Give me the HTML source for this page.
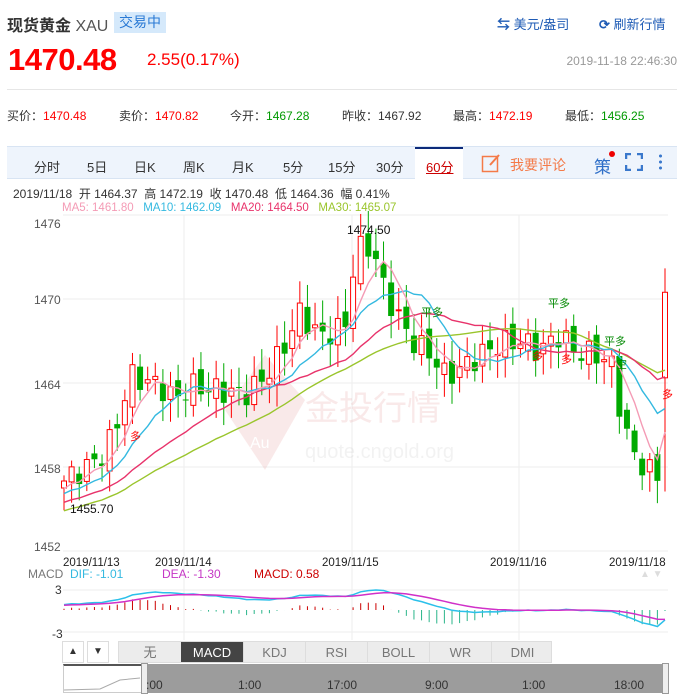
<!DOCTYPE html>
<html><head><meta charset="utf-8">
<style>
*{margin:0;padding:0;box-sizing:border-box}
body{width:684px;height:697px;background:#fff;font-family:"Liberation Sans","Noto Sans CJK SC",sans-serif;position:relative;overflow:hidden;color:#333}
.a{position:absolute;white-space:nowrap}
.r{color:#f00}.g{color:#090}
</style></head><body>
<div class="a" style="left:7px;top:12px;font-size:16px;color:#333;font-weight:bold">现货黄金 <span style="font-weight:normal;color:#555">XAU</span></div>
<div class="a" style="left:114px;top:12px;width:52px;height:21px;background:#d5e9fb;color:#2a7ad5;font-size:14px;line-height:21px;text-align:center">交易中</div>
<div class="a" style="left:497px;top:14px;font-size:13px;color:#1e5bb5"><span style="font-weight:bold">⇆</span> 美元/盎司</div>
<div class="a" style="left:599px;top:14px;font-size:13px;color:#1e5bb5"><span style="font-weight:bold">⟳</span> 刷新行情</div>
<div class="a r" style="left:8px;top:42px;font-size:31px;font-weight:bold;letter-spacing:-0.5px">1470.48</div>
<div class="a r" style="left:147px;top:50px;font-size:17px">2.55(0.17%)</div>
<div class="a" style="right:7px;top:54px;font-size:12px;color:#999">2019-11-18 22:46:30</div>
<div class="a" style="left:7px;top:89px;width:670px;height:1px;background:#e6e6e6"></div>
<div class="a" style="left:7px;top:107px;font-size:12px;color:#333">买价：<span class="r">1470.48</span></div>
<div class="a" style="left:119px;top:107px;font-size:12px">卖价：<span class="r">1470.82</span></div>
<div class="a" style="left:230px;top:107px;font-size:12px">今开：<span class="g">1467.28</span></div>
<div class="a" style="left:342px;top:107px;font-size:12px">昨收：1467.92</div>
<div class="a" style="left:453px;top:107px;font-size:12px">最高：<span class="r">1472.19</span></div>
<div class="a" style="left:565px;top:107px;font-size:12px">最低：<span class="g">1456.25</span></div>
<!-- tabs -->
<div class="a" style="left:7px;top:146px;width:670px;height:33px;background:#eef4fc;border-top:1px solid #d8e4f3;border-bottom:1px solid #d8e4f3"></div>
<div class="a" style="left:415px;top:147px;width:48px;height:33px;background:#fff;border-top:2px solid #0c2a7a"></div>
<div class="a" style="left:0;top:157px;font-size:13px;color:#333;width:470px">
<span class="a" style="left:34px">分时</span><span class="a" style="left:87px">5日</span><span class="a" style="left:134px">日K</span><span class="a" style="left:183px">周K</span><span class="a" style="left:232px">月K</span><span class="a" style="left:283px">5分</span><span class="a" style="left:328px">15分</span><span class="a" style="left:376px">30分</span><span class="a" style="left:426px;color:#c00;text-decoration:underline">60分</span></div>
<svg class="a" style="left:481px;top:153px" width="20" height="20"><rect x="1.5" y="3.5" width="15" height="15" fill="none" stroke="#f47a48" stroke-width="1.5"/><path d="M9 12 L18 2" stroke="#f47a48" stroke-width="2"/></svg>
<div class="a" style="left:510px;top:155px;font-size:14px;color:#f47a48">我要评论</div>
<div class="a" style="left:594px;top:153px;font-size:17px;color:#2f6fc8">策</div>
<div class="a" style="left:609px;top:151px;width:6px;height:6px;border-radius:3px;background:#e00"></div>
<svg class="a" style="left:625px;top:153px" width="18" height="18" fill="none" stroke="#3a78cc" stroke-width="2.5"><path d="M1 6V1h5M12 1h5v5M17 12v5h-5M6 17H1v-5"/></svg>
<div class="a" style="left:659px;top:153px;width:3px;height:18px;background:radial-gradient(circle,#3a78cc 1.4px,transparent 1.6px) 0 0/3px 6px"></div>
<div class="a" style="left:13px;top:185px;font-size:12px;color:#333">2019/11/18 &nbsp;开 1464.37 &nbsp;高 1472.19 &nbsp;收 1470.48 &nbsp;低 1464.36 &nbsp;幅 0.41%</div>
<div class="a" style="left:62px;top:202px;font-size:11.5px"><span style="color:#f49bb5">MA5: 1461.80</span> &nbsp; <span style="color:#34b9e0">MA10: 1462.09</span> &nbsp; <span style="color:#e8336b">MA20: 1464.50</span> &nbsp; <span style="color:#9ac52c">MA30: 1465.07</span></div>
<svg id="ch" class="a" style="left:0;top:0" width="684" height="697"></svg>
<div class="a" style="left:28px;top:567px;font-size:12px;color:#777">MACD <span style="color:#34b9e0">&nbsp;DIF: -1.01</span></div>
<div class="a" style="left:162px;top:567px;font-size:12px;color:#c537c5">DEA: -1.30</div>
<div class="a" style="left:254px;top:567px;font-size:12px;color:#c00">MACD: 0.58</div>
<div class="a" style="left:640px;top:569px;font-size:10px;color:#ddd">▲ ▼</div>
<!-- bottom buttons -->
<div class="a" style="left:62px;top:641px;width:22px;height:22px;border:1px solid #ddd;font-size:10px;text-align:center;line-height:20px">▲</div>
<div class="a" style="left:87px;top:641px;width:22px;height:22px;border:1px solid #ddd;font-size:10px;text-align:center;line-height:20px">▼</div>
<div class="a" style="left:118px;top:641px;width:434px;height:22px;background:#ececec;border:1px solid #ddd;font-size:13px;color:#777;line-height:21px">
<span class="a" style="left:0;width:62px;text-align:center">无</span>
<span class="a" style="left:62px;width:62px;text-align:center;background:#444;color:#fff;height:20px">MACD</span>
<span class="a" style="left:124px;width:62px;text-align:center;border-left:1px solid #ddd">KDJ</span>
<span class="a" style="left:186px;width:62px;text-align:center;border-left:1px solid #ddd">RSI</span>
<span class="a" style="left:248px;width:62px;text-align:center;border-left:1px solid #ddd">BOLL</span>
<span class="a" style="left:310px;width:62px;text-align:center;border-left:1px solid #ddd">WR</span>
<span class="a" style="left:372px;width:62px;text-align:center;border-left:1px solid #ddd">DMI</span></div>
<div class="a" style="left:63px;top:664px;width:605px;height:29px;border:1px solid #ccc;border-top:2px solid #555"></div>
<div class="a" style="left:147px;top:664px;width:519px;height:29px;background:#9c9c9c"></div>
<div class="a" style="left:141px;top:663px;width:7px;height:31px;background:#eee;border:1px solid #999"></div>
<div class="a" style="left:662px;top:663px;width:7px;height:31px;background:#eee;border:1px solid #999"></div>
<div class="a" style="left:146px;top:678px;font-size:12px;color:#333">:00</div>
<div class="a" style="left:238px;top:678px;font-size:12px;color:#333">1:00</div>
<div class="a" style="left:327px;top:678px;font-size:12px;color:#333">17:00</div>
<div class="a" style="left:425px;top:678px;font-size:12px;color:#333">9:00</div>
<div class="a" style="left:522px;top:678px;font-size:12px;color:#333">1:00</div>
<div class="a" style="left:614px;top:678px;font-size:12px;color:#333">18:00</div>
<script>
var S=document.getElementById('ch'),h='';
function Y(p){return 299+(1470-p)*14.0}
[215,299,383,467,551].forEach(function(y){h+='<line x1="63" x2="668" y1="'+y+'" y2="'+y+'" stroke="#eee"/>'});
[184,352,519].forEach(function(x){h+='<line x1="'+x+'" x2="'+x+'" y1="215" y2="640" stroke="#eee"/>'});
h+='<line x1="63" x2="668" y1="590" y2="590" stroke="#eee"/><line x1="63" x2="668" y1="632" y2="632" stroke="#eee"/>';
[['1476',228],['1470',304],['1464',389],['1458',473],['1452',551]].forEach(function(t){h+='<text x="34" y="'+t[1]+'" font-size="12" fill="#555">'+t[0]+'</text>'});
h+='<text x="55" y="594" font-size="12" fill="#333">3</text><text x="52" y="638" font-size="12" fill="#333">-3</text>';
[['2019/11/13',63],['2019/11/14',155],['2019/11/15',322],['2019/11/16',490],['2019/11/18',609]].forEach(function(t){h+='<text x="'+t[1]+'" y="566" font-size="11.5" fill="#222">'+t[0]+'</text>'});
h+='<g opacity="0.1"><path d="M265 355 L305 400 L265 470 L225 410 Z" fill="#c33"/><text x="305" y="420" font-size="34" fill="#c33" font-family="Noto Sans CJK SC">金投行情</text><text x="305" y="458" font-size="20" fill="#888">quote.cngold.org</text><text x="250" y="448" font-size="16" fill="#fff">Au</text></g>';
var K=[[64,1457],[100,1458.6],[115,1460.5],[130,1464.5],[160,1463.8],[175,1462.8],[190,1463.8],[215,1463.5],[245,1463.2],[262,1464.2],[280,1466],[300,1469],[320,1467.3],[345,1468],[356,1473.5],[372,1473.8],[385,1470.5],[400,1468.5],[412,1467],[432,1466],[445,1464.5],[460,1465],[480,1466],[500,1466.8],[520,1467],[540,1466.3],[560,1467.5],[575,1466.2],[600,1466],[612,1465.2],[622,1461.5],[632,1459],[645,1458],[656,1457.3]];
function interp(x){for(var i=0;i<K.length-1;i++){if(x<=K[i+1][0]){var t=(x-K[i][0])/(K[i+1][0]-K[i][0]);return K[i][1]+t*(K[i+1][1]-K[i][1]);}}return K[K.length-1][1]}
var N=80,dx=(665-64)/(N-1),C=[],O=[];
var pre=[];for(var i=0;i<30;i++)pre.push(1453+i*0.12);
for(var i=0;i<N;i++){var x=64+i*dx;var c=interp(x)+Math.sin(i*2.3)*0.9;C.push(c);}
C[N-1]=1470.48;
var all=pre.concat(C);
for(var i=0;i<N;i++){O.push(i==0?1456.5:C[i-1]+Math.cos(i*1.7)*0.5);}
O[N-1]=1464.37;
for(var i=0;i<N;i++){var x=64+i*dx,o=O[i],c=C[i],up=c>=o,col=up?'#f00':'#0a0';var hi=Math.max(o,c)+0.4+Math.abs(Math.sin(i*3.1))*1.2,lo=Math.min(o,c)-0.4-Math.abs(Math.cos(i*2.7))*1.2;
if(i==N-1){hi=1472.19;lo=1456.25}
h+='<line x1="'+x+'" x2="'+x+'" y1="'+Y(hi)+'" y2="'+Y(lo)+'" stroke="'+col+'"/>';
var yt=Y(Math.max(o,c)),hh=Math.max(1,Math.abs(Y(o)-Y(c)));
if(up)h+='<rect x="'+(x-2.5)+'" y="'+yt+'" width="5" height="'+hh+'" fill="#fff" stroke="#f00"/>';else h+='<rect x="'+(x-3)+'" y="'+yt+'" width="6" height="'+hh+'" fill="#0a0"/>';}
function ma(n,col){var p='';for(var i=0;i<N;i++){var s=0;for(var j=0;j<n;j++)s+=all[30+i-j];var x=64+i*dx;p+=(i?'L':'M')+x.toFixed(1)+' '+Y(s/n).toFixed(1);}h+='<path d="'+p+'" fill="none" stroke="'+col+'" stroke-width="1.4"/>';}
ma(30,'#9ac52c');ma(20,'#e8336b');ma(10,'#34b9e0');ma(5,'#f49bb5');
h+='<text x="347" y="234" font-size="12" fill="#111">1474.50</text><text x="70" y="513" font-size="12" fill="#111">1455.70</text>';
[[130,440,'多','#f00'],[532,360,'多','#f00'],[561,363,'多','#f00'],[662,398,'多','#f00'],[421,316,'平多','#080'],[548,307,'平多','#080'],[604,345,'平多','#080'],[616,368,'空','#080']].forEach(function(t){h+='<text x="'+t[0]+'" y="'+t[1]+'" font-size="11" fill="'+t[3]+'" font-family="Noto Sans CJK SC">'+t[2]+'</text>'});
var e12=all[0],e26=all[0],dea=0,D=[],E=[];
for(var i=0;i<all.length;i++){e12=e12+(all[i]-e12)*2/13;e26=e26+(all[i]-e26)*2/27;var dif=e12-e26;dea=dea+(dif-dea)*0.2;if(i>=30){D.push(dif);E.push(dea);}}
var mx=0;for(var i=0;i<N;i++)mx=Math.max(mx,Math.abs(D[i]),Math.abs(E[i]));
var sc=20/mx;
function my(v){return 610-v*sc}
var pd='',pe='';
for(var i=0;i<N;i++){var x=64+i*dx,m=(D[i]-E[i])*2;h+='<line x1="'+x+'" x2="'+x+'" y1="610" y2="'+my(m)+'" stroke="'+(m>=0?'#c00':'#2ab58a')+'"/>';pd+=(i?'L':'M')+x.toFixed(1)+' '+my(D[i]).toFixed(1);pe+=(i?'L':'M')+x.toFixed(1)+' '+my(E[i]).toFixed(1);}
h+='<path d="'+pd+'" fill="none" stroke="#2bc0ea" stroke-width="1.5"/><path d="'+pe+'" fill="none" stroke="#d030c8" stroke-width="1.5"/>';
var pn='';for(var i=0;i<N;i++){var x=148+i*(518/N);pn+=(i?'L':'M')+x.toFixed(1)+' '+(690-(C[i]-1455)*1.3).toFixed(1);}
h+='<path d="'+pn+'" fill="none" stroke="#555"/><path d="M64 690 L100 689 L120 680 L140 678" fill="none" stroke="#aaa"/>';
S.innerHTML=h;
</script>
</body></html>
